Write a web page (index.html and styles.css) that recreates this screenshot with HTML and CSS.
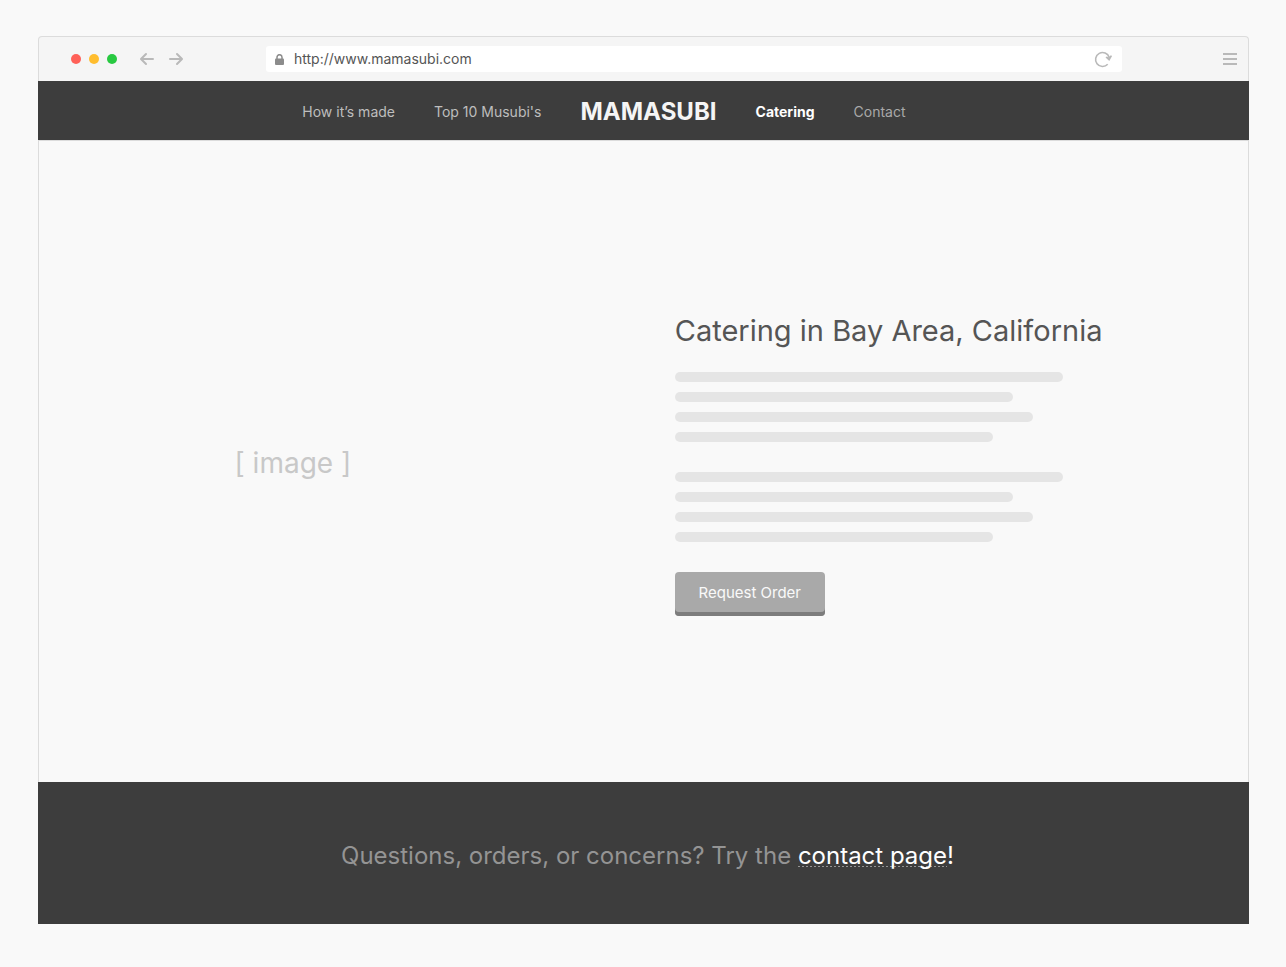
FILE: index.html
```html
<!DOCTYPE html>
<html lang="en">
<head>
<meta charset="utf-8">
<meta name="viewport" content="width=device-width, initial-scale=1">
<title>Mamasubi – Catering</title>
<link rel="stylesheet" href="styles.css">
</head>
<body>
<div class="browser">
  <div class="toolbar">
    <div class="toolbar-left">
      <div class="lights">
        <span class="light light-red"></span>
        <span class="light light-yellow"></span>
        <span class="light light-green"></span>
      </div>
      <div class="history">
        <button class="icon-button" type="button" aria-label="Back">
          <svg width="16" height="14" viewBox="0 0 16 14"><path d="M7 2 2 7l5 5M2.200 7H14" /></svg>
        </button>
        <button class="icon-button" type="button" aria-label="Forward">
          <svg width="16" height="14" viewBox="0 0 16 14"><path d="M9 2l5 5-5 5M13.800 7H2" /></svg>
        </button>
      </div>
    </div>
    <div class="address">
      <svg class="lock" width="9" height="11" viewBox="0 0 9 11"><rect x="0" y="4.500" width="9" height="6.500" rx="1" /><path d="M2 5V3.200a2.500 2.500 0 0 1 5 0V5" /></svg>
      <input class="url" type="text" aria-label="Address" value="http://www.mamasubi.com">
      <button class="icon-button" type="button" aria-label="Reload">
        <svg width="20" height="18" viewBox="0 0 20 18"><path class="reload-arc" d="M14.700 14.300a7 7 0 1 1 1.500-7" /><path class="reload-head" d="M12.500 7.600l1.200-1 2.200 .700 1.900-2 1.300 .800-2.800 5z" /></svg>
      </button>
    </div>
    <div class="toolbar-right">
      <button class="icon-button" type="button" aria-label="Menu">
        <svg width="14" height="12" viewBox="0 0 14 12"><path class="menu-lines" d="M0 1h14M0 6h14M0 11h14" /></svg>
      </button>
    </div>
  </div>

  <nav class="nav">
    <div class="nav-group nav-group-left">
      <a class="nav-link" href="#made">How it’s made</a>
      <a class="nav-link" href="#top">Top 10 Musubi's</a>
    </div>
    <a class="logo" href="#home">MAMASUBI</a>
    <div class="nav-group">
      <a class="nav-link nav-link-active" href="#catering" aria-current="page">Catering</a>
      <a class="nav-link nav-link-dim" href="#contact">Contact</a>
    </div>
  </nav>

  <main class="main">
    <div class="image-slot">[ image ]</div>
    <section class="content">
      <h1 class="title">Catering in Bay Area, California</h1>
      <div class="paragraph">
        <span class="line line-a"></span>
        <span class="line line-b"></span>
        <span class="line line-c"></span>
        <span class="line line-d"></span>
      </div>
      <div class="paragraph">
        <span class="line line-a"></span>
        <span class="line line-b"></span>
        <span class="line line-c"></span>
        <span class="line line-d"></span>
      </div>
      <button class="order" type="button">Request Order</button>
    </section>
  </main>

  <footer class="footer">
    <p class="footer-text">Questions, orders, or concerns? Try the <a class="footer-link" href="#contact">contact page</a><span class="footer-mark">!</span></p>
  </footer>
</div>
</body>
</html>
```
FILE: styles.css
```css
* {
  box-sizing: border-box;
}

body {
  margin: 0;
  padding: 36px 37px 43px 38px;
  min-height: 100vh;
  display: flex;
  background: #f9f9f9;
  color: #555;
  font-family: Inter, "Liberation Sans", sans-serif;
}

a {
  text-decoration: none;
}

.browser {
  flex: 1;
  min-width: 0;
  display: flex;
  flex-direction: column;
}

.toolbar {
  display: grid;
  grid-template-columns: 227px 1fr 126px;
  align-items: center;
  height: 45px;
  border: 1px solid #dcdcdc;
  border-bottom: 0;
  border-radius: 4px 4px 0 0;
  background: #f5f5f5;
}

.toolbar-left {
  display: flex;
  align-items: center;
  gap: 22px;
  padding-left: 32px;
}

.lights {
  display: flex;
  gap: 8px;
}

.light {
  width: 10px;
  height: 10px;
  border-radius: 50%;
}

.light-red {
  background: #ff6158;
}

.light-yellow {
  background: #ffbd2e;
}

.light-green {
  background: #28c941;
}

.history {
  display: flex;
  gap: 13px;
}

.icon-button {
  display: flex;
  padding: 0;
  border: 0;
  background: none;
  cursor: pointer;
}

.icon-button path {
  fill: none;
  stroke: #b9b9b9;
  stroke-width: 2;
  stroke-linecap: round;
  stroke-linejoin: round;
}

.icon-button .reload-arc {
  stroke-width: 1.6;
  stroke-linecap: butt;
}

.icon-button .reload-head {
  fill: #b9b9b9;
  stroke: none;
}

.icon-button .menu-lines {
  stroke-linecap: butt;
}

.address {
  display: flex;
  align-items: center;
  height: 26px;
  padding: 0 9px;
  border-radius: 3px;
  background: #fff;
}

.lock {
  flex: none;
  fill: #8c8c8c;
}

.lock path {
  fill: none;
  stroke: #8c8c8c;
  stroke-width: 1.5;
}

.url {
  flex: 1;
  min-width: 0;
  margin: 0;
  padding: 0 10px;
  border: 0;
  outline: 0;
  background: none;
  color: #555;
  font: 14px/20px Inter, "Liberation Sans", sans-serif;
}

.toolbar-right {
  display: flex;
  justify-content: flex-end;
  padding-right: 11px;
}

.nav {
  display: grid;
  grid-template-columns: 1fr auto 1fr;
  align-items: center;
  gap: 39px;
  height: 59px;
  padding: 2px 0 0 10px;
  background: #3d3d3d;
}

.nav-group {
  display: flex;
  gap: 39px;
}

.nav-group-left {
  justify-content: flex-end;
}

.nav-link {
  color: #bebebe;
  font-size: 14px;
  line-height: 20px;
  white-space: nowrap;
}

.nav-link-active {
  color: #fff;
  font-weight: 700;
}

.nav-link-dim {
  color: #a9a9a9;
}

.logo {
  color: #f5f5f5;
  font-size: 24px;
  font-weight: 700;
  line-height: 30px;
}

.main {
  flex: 1;
  display: grid;
  grid-template-columns: 42% 1fr;
  align-items: center;
  padding-top: 4px;
  border: 1px solid #dcdcdc;
  border-bottom: 0;
}

.image-slot {
  padding-bottom: 2px;
  color: #c8c8c8;
  font-size: 28px;
  line-height: 40px;
  text-align: center;
}

.content {
  padding: 0 40px 0 128px;
}

.title {
  margin: 0 0 21px;
  font-size: 29px;
  font-weight: 400;
  line-height: 40px;
}

.paragraph {
  display: flex;
  flex-direction: column;
  gap: 10px;
  margin-bottom: 30px;
}

.line {
  height: 10px;
  max-width: 100%;
  border-radius: 5px;
  background: #e5e5e5;
}

.line-a {
  width: 388px;
}

.line-b {
  width: 338px;
}

.line-c {
  width: 358px;
}

.line-d {
  width: 318px;
}

.order {
  display: block;
  min-width: 150px;
  height: 44px;
  padding: 0 20px 3px;
  border: 0;
  border-radius: 4px;
  background: #a9a9a9;
  box-shadow: inset 0 -4px #7d7d7d;
  color: #f9f9f9;
  font: 15px/20px Inter, "Liberation Sans", sans-serif;
  cursor: pointer;
}

.footer {
  padding: 59px 20px 53px;
  background: #3d3d3d;
  text-align: center;
}

.footer-text {
  margin: 0;
  padding-left: 8px;
  color: #949494;
  font-size: 24px;
  line-height: 30px;
}

.footer-link {
  background: repeating-linear-gradient(to right, #949494 0 2px, transparent 2px 4px) 0 25px / 100% 1px no-repeat;
  color: #fff;
}

.footer-mark {
  color: #fff;
}
```
